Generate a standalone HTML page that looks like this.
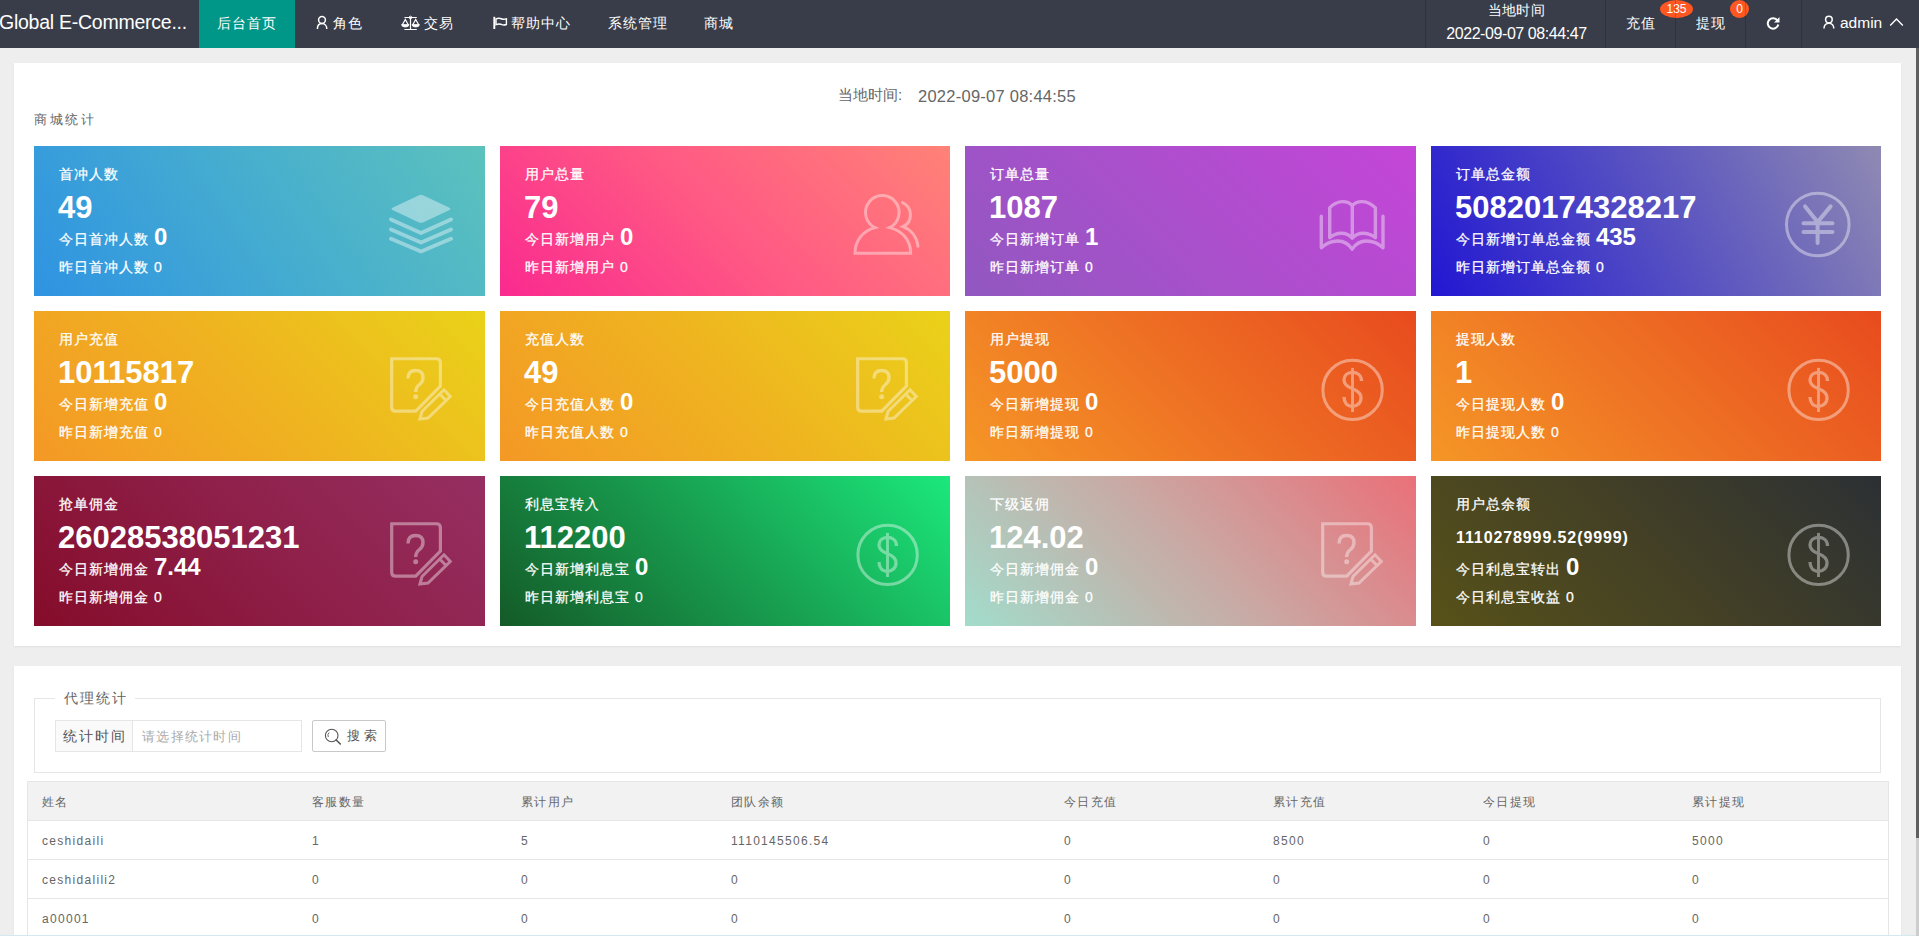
<!DOCTYPE html>
<html><head><meta charset="utf-8">
<style>
*{margin:0;padding:0;box-sizing:border-box}
html,body{width:1919px;height:936px;overflow:hidden;background:#eeeeee;font-family:"Liberation Sans",sans-serif;font-size:14px;color:#666}
.hdr{position:absolute;left:0;top:0;width:1919px;height:48px;background:#393D49;color:#fff}
.logo{position:absolute;left:-1px;top:0;height:48px;line-height:45px;font-size:19.5px;color:#fff;white-space:nowrap;letter-spacing:-0.25px}
.it{position:absolute;top:0;height:48px;line-height:46px;font-size:14px;color:#fff;white-space:nowrap;letter-spacing:1px}
.act{background:#009688}
.it svg{position:absolute}
.sep{position:absolute;top:0;width:1px;height:48px;background:rgba(0,0,0,.17);z-index:2}
.badge{position:absolute;top:0;height:18px;border-radius:50%;background:#FF5722;color:#fff;font-size:12px;line-height:18px;text-align:center}
.scroll{position:absolute;left:1916px;top:48px;width:3px;height:790px;background:#5f5f5f}
.scroll2{position:absolute;left:1916px;top:838px;width:3px;height:98px;background:#cdcdcd}
.panel{position:absolute;background:#fff;box-shadow:0 1px 2px rgba(0,0,0,.06)}
.card{position:absolute;height:150px;color:#fff;overflow:hidden}
.card .t{position:absolute;left:25px;top:20px;-webkit-text-stroke:0.25px #fff;font-size:14px;line-height:16px;white-space:nowrap;letter-spacing:1px}
.card .n{position:absolute;left:24px;top:45px;font-size:31px;font-weight:bold;line-height:34px;white-space:nowrap}
.card .n.small{font-size:16px;top:52px;line-height:20px;letter-spacing:0.9px;left:25px}
.card .d{position:absolute;left:25px;top:79.5px;-webkit-text-stroke:0.25px #fff;font-size:14px;line-height:20px;white-space:nowrap;letter-spacing:1px}
.card .d b{font-size:24px;font-weight:bold;letter-spacing:0;position:relative;top:1.5px;-webkit-text-stroke:0}
.card .y{position:absolute;left:25px;top:112.5px;-webkit-text-stroke:0.25px #fff;font-size:14px;line-height:16px;white-space:nowrap;letter-spacing:1px}
.card svg{position:absolute}
.ttl{position:absolute;top:86px;font-size:15px;line-height:18px;color:#666;white-space:nowrap}
.sub{position:absolute;left:34px;top:111px;font-size:13px;color:#666;letter-spacing:2.5px}
.fs{position:absolute;left:34px;top:698px;width:847px;height:75px;border:1px solid #e6e6e6}
.row{position:absolute;left:27px;width:1862px;height:40px;border:1px solid #e6e6e6;font-size:12px;color:#666;letter-spacing:1.3px}
.row.th{background:#f2f2f2}
.row span{position:absolute;top:12px;white-space:nowrap}
.row.td span{top:13px}
</style></head><body>
<div class="hdr">
  <div class="logo">Global E-Commerce...</div>
  <div class="it act" style="left:199px;width:96px;text-align:center">后台首页</div>
  <svg style="position:absolute;left:312px;top:12px" width="20" height="22" viewBox="312 12 20 22"><circle cx="322" cy="20" r="3.4" fill="none" stroke="#fff" stroke-width="1.5"/><path d="M317.4 29 C317.4 25.5 319.5 23.6 322 23.6 C324.5 23.6 326.8 25.5 326.8 29" fill="none" stroke="#fff" stroke-width="1.5"/></svg>
  <div class="it" style="left:333px">角色</div>
  <svg style="position:absolute;left:398px;top:12px" width="24" height="22" viewBox="398 12 24 22"><path d="M404.4 17.5 L416.8 17.5 M410.5 17 L410.5 29.5 M404.4 29.5 L416.8 29.5 M402.2 25 L405.3 19.5 L408.4 25 M412.6 25 L415.7 19.5 L418.8 25" fill="none" stroke="#fff" stroke-width="1.2"/><circle cx="410.5" cy="17.5" r="1.3" fill="none" stroke="#fff" stroke-width="1"/><path d="M401.6 24.6 L409 24.6 A3.7 2.4 0 0 1 401.6 24.6 Z M412 24.6 L419.4 24.6 A3.7 2.4 0 0 1 412 24.6 Z" fill="#fff" stroke="#fff" stroke-width="0.8"/></svg>
  <div class="it" style="left:424px">交易</div>
  <svg style="position:absolute;left:488px;top:12px" width="24" height="22" viewBox="488 12 24 22"><path d="M494.3 16.8 L494.3 29" fill="none" stroke="#fff" stroke-width="1.9"/><path d="M496 18.8 C498.5 17.8 500.5 18.3 502 19 C503.5 19.7 505 19.2 506.4 18.8 L506.4 24.5 C505 25 503.5 25.3 502 24.7 C500.5 24 498.5 23.7 496 24.7 Z" fill="none" stroke="#fff" stroke-width="1.4"/></svg>
  <div class="it" style="left:511px">帮助中心</div>
  <div class="it" style="left:608px">系统管理</div>
  <div class="it" style="left:704px">商城</div>

  <div class="sep" style="left:1425px"></div>
  <div class="it" style="left:1427px;width:179px;text-align:center;line-height:18px;top:1px;font-size:14px;letter-spacing:0.4px">当地时间</div>
  <div class="it" style="left:1427px;width:179px;text-align:center;line-height:18px;top:25px;font-size:16px;letter-spacing:-0.42px;padding-left:0px">2022-09-07 08:44:47</div>
  <div class="sep" style="left:1605px"></div>
  <div class="it" style="left:1626px;top:0px">充值</div>
  <div class="badge" style="left:1660px;width:33px">135</div>
  <div class="sep" style="left:1675px"></div>
  <div class="it" style="left:1696px;top:0px">提现</div>
  <div class="badge" style="left:1730px;width:19px">0</div>
  <div class="sep" style="left:1745px"></div>
  <div class="it" style="left:1766px">
    <svg style="left:0;top:16px" width="14" height="14" viewBox="0 0 14 14"><path d="M11.5 4.5 A5.3 5.3 0 1 0 12.3 8.5" fill="none" stroke="#fff" stroke-width="2"/><path d="M13.5 1 L13.5 6.5 L8 6.5 Z" fill="#fff"/></svg></div>
  <div class="sep" style="left:1801px"></div>
  <svg style="position:absolute;left:1818px;top:12px" width="20" height="22" viewBox="1818 12 20 22"><circle cx="1828.9" cy="19.6" r="3.3" fill="none" stroke="#fff" stroke-width="1.5"/><path d="M1824 28.6 C1824 25.2 1826.2 23.2 1828.9 23.2 C1831.6 23.2 1833.8 25.2 1833.8 28.6" fill="none" stroke="#fff" stroke-width="1.5"/></svg>
  <div class="it" style="left:1840px;font-size:15.5px;letter-spacing:0">admin</div>
  <svg style="position:absolute;left:1889px;top:17px" width="16" height="10" viewBox="0 0 16 10"><path d="M1.2 8.5 L7.5 2 L13.8 8.5" fill="none" stroke="#fff" stroke-width="1.4"/></svg>
</div>
<div class="scroll"></div><div class="scroll2"></div>

<div class="panel" style="left:14px;top:63px;width:1887px;height:583px"></div>
<div class="panel" style="left:14px;top:666px;width:1887px;height:280px"></div>
<div class="ttl" style="left:838px">当地时间</div><div class="ttl" style="left:898px;font-size:15px">:</div><div class="ttl" style="left:918px;font-size:16.5px;letter-spacing:0.25px;top:86.5px">2022-09-07 08:44:55</div>
<div class="sub">商城统计</div>
<div class="card" style="left:34px;top:146px;width:451px;background:linear-gradient(55deg,#2f93e2 0%,#45acd0 50%,#5cc2bd 100%)">
<div class="t">首冲人数</div><div class="n">49</div>
<div class="d">今日首冲人数 <b>0</b></div><div class="y">昨日首冲人数 0</div>
<svg style="left:352px;top:46px;opacity:.4" width="70" height="62" viewBox="0 0 70 62">
   <path d="M33 3.2 Q35 2.3 37 3.2 L63 15.4 Q66 16.8 63 18.2 L37 30.4 Q35 31.3 33 30.4 L7 18.2 Q4 16.8 7 15.4 Z" fill="#fff"/>
   <path d="M5 27.4 L35 41 L65 27.4 M5 37.5 L35 50.5 L65 37.5 M5 46.7 L35 59.6 L65 46.7" fill="none" stroke="#fff" stroke-width="3.8" stroke-linecap="round" stroke-linejoin="round"/></svg></div>
<div class="card" style="left:500px;top:146px;width:450px;background:linear-gradient(45deg,#fa2a8f 0%,#ff5a84 50%,#ff8277 100%)">
<div class="t">用户总量</div><div class="n">79</div>
<div class="d">今日新增用户 <b>0</b></div><div class="y">昨日新增用户 0</div>
<svg style="left:352px;top:46px;opacity:.4" width="70" height="66" viewBox="0 0 70 66">
   <path d="M23.1 35.6 A16.8 16.8 0 1 1 37.5 35.6 C50 38.5 58.7 48 58.7 61.3 L3 61.3 C3 48 11.5 38.5 23.1 35.6 Z" fill="none" stroke="#fff" stroke-width="3" stroke-linejoin="miter"/>
   <path d="M50.5 10.6 A13.2 13.2 0 0 1 51 34.6 C60 38 65 46 66 54.3" fill="none" stroke="#fff" stroke-width="3" stroke-linecap="round"/></svg></div>
<div class="card" style="left:965px;top:146px;width:451px;background:linear-gradient(45deg,#9158c0 0%,#ab4fcc 50%,#c545d8 100%)">
<div class="t">订单总量</div><div class="n">1087</div>
<div class="d">今日新增订单 <b>1</b></div><div class="y">昨日新增订单 0</div>
<svg style="left:352px;top:52px;opacity:.4" width="72" height="56" viewBox="0 0 72 56">
   <path d="M12.7 39.7 L12.7 9.9 C20 2 30 2 35.3 7.5 C40.6 2 50.6 2 58.4 9.9 L58.4 39.7 C51 34 41 33.5 35.3 40.2 C29.6 33.5 19.6 34 12.7 39.7 Z M35.3 7.5 L35.3 40" fill="none" stroke="#fff" stroke-width="3.4" stroke-linejoin="round" stroke-linecap="round"/>
   <path d="M4.3 18.3 L4.3 49.8 C14 41 28 40 35.1 51.2 C42.2 40 56.3 41 66 49.8 L66 18.3" fill="none" stroke="#fff" stroke-width="3.4" stroke-linejoin="round" stroke-linecap="round"/></svg></div>
<div class="card" style="left:1431px;top:146px;width:450px;background:linear-gradient(62deg,#2217d2 0%,#5650c2 50%,#8f8ab2 100%)">
<div class="t">订单总金额</div><div class="n">50820174328217</div>
<div class="d">今日新增订单总金额 <b>435</b></div><div class="y">昨日新增订单总金额 0</div>
<svg style="left:351px;top:44px;opacity:.4" width="70" height="70" viewBox="0 0 70 70">
   <circle cx="35.8" cy="34.5" r="31.3" fill="none" stroke="#fff" stroke-width="3"/>
   <path d="M23.1 16.4 L35.6 32 L48.6 16.4 M35.6 32 L35.6 53 M21.5 33.3 L50.5 33.3 M21.5 41.9 L50.5 41.9" fill="none" stroke="#fff" stroke-width="4" stroke-linecap="round"/></svg></div>
<div class="card" style="left:34px;top:311px;width:451px;background:linear-gradient(45deg,#f49826 0%,#efb320 50%,#ead219 100%)">
<div class="t">用户充值</div><div class="n">10115817</div>
<div class="d">今日新增充值 <b>0</b></div><div class="y">昨日新增充值 0</div>
<svg style="left:354px;top:45px;opacity:.4" width="70" height="70" viewBox="0 0 70 70">
   <path d="M3.7 2.75 L48.4 2.75 Q52.4 2.75 52.4 6.75 L52.4 30.2 L27.7 55.2 L7.7 55.2 Q3.7 55.2 3.7 51.2 Z" fill="none" stroke="#fff" stroke-width="3.2"/>
   <path d="M20 22.5 Q20 14.5 27.5 14.5 Q35 14.5 35 21.5 Q35 25.5 31.5 28.5 Q27.7 31.5 27.7 36" fill="none" stroke="#fff" stroke-width="3.4"/>
   <circle cx="27.7" cy="40.7" r="2.5" fill="#fff"/>
   <path d="M32 63 L34 55.5 L56 33.8 L62.3 40.5 L40 62 Z M51.7 38 L58 44.5" fill="none" stroke="#fff" stroke-width="3" stroke-linejoin="miter"/></svg></div>
<div class="card" style="left:500px;top:311px;width:450px;background:linear-gradient(45deg,#f49826 0%,#efb320 50%,#ead219 100%)">
<div class="t">充值人数</div><div class="n">49</div>
<div class="d">今日充值人数 <b>0</b></div><div class="y">昨日充值人数 0</div>
<svg style="left:354px;top:45px;opacity:.4" width="70" height="70" viewBox="0 0 70 70">
   <path d="M3.7 2.75 L48.4 2.75 Q52.4 2.75 52.4 6.75 L52.4 30.2 L27.7 55.2 L7.7 55.2 Q3.7 55.2 3.7 51.2 Z" fill="none" stroke="#fff" stroke-width="3.2"/>
   <path d="M20 22.5 Q20 14.5 27.5 14.5 Q35 14.5 35 21.5 Q35 25.5 31.5 28.5 Q27.7 31.5 27.7 36" fill="none" stroke="#fff" stroke-width="3.4"/>
   <circle cx="27.7" cy="40.7" r="2.5" fill="#fff"/>
   <path d="M32 63 L34 55.5 L56 33.8 L62.3 40.5 L40 62 Z M51.7 38 L58 44.5" fill="none" stroke="#fff" stroke-width="3" stroke-linejoin="miter"/></svg></div>
<div class="card" style="left:965px;top:311px;width:451px;background:linear-gradient(45deg,#f59626 0%,#ee7024 50%,#e84b1e 100%)">
<div class="t">用户提现</div><div class="n">5000</div>
<div class="d">今日新增提现 <b>0</b></div><div class="y">昨日新增提现 0</div>
<svg style="left:352px;top:44px;opacity:.4" width="70" height="70" viewBox="0 0 70 70">
   <circle cx="35.6" cy="34.9" r="29.7" fill="none" stroke="#fff" stroke-width="3"/>
   <path d="M44.5 26 C44.5 20 40 17.3 35.5 17.3 C30.5 17.3 27 20.5 27 25 C27 30 31 32 35.5 33.7 C40.5 35.5 44 38 44 43 C44 48 40 51.3 35.5 51.3 C30 51.3 27 47.5 27 42" fill="none" stroke="#fff" stroke-width="3.3"/>
   <path d="M35.5 12.9 L35.5 57" fill="none" stroke="#fff" stroke-width="2.9"/></svg></div>
<div class="card" style="left:1431px;top:311px;width:450px;background:linear-gradient(45deg,#f59626 0%,#ee7024 50%,#e84b1e 100%)">
<div class="t">提现人数</div><div class="n">1</div>
<div class="d">今日提现人数 <b>0</b></div><div class="y">昨日提现人数 0</div>
<svg style="left:352px;top:44px;opacity:.4" width="70" height="70" viewBox="0 0 70 70">
   <circle cx="35.6" cy="34.9" r="29.7" fill="none" stroke="#fff" stroke-width="3"/>
   <path d="M44.5 26 C44.5 20 40 17.3 35.5 17.3 C30.5 17.3 27 20.5 27 25 C27 30 31 32 35.5 33.7 C40.5 35.5 44 38 44 43 C44 48 40 51.3 35.5 51.3 C30 51.3 27 47.5 27 42" fill="none" stroke="#fff" stroke-width="3.3"/>
   <path d="M35.5 12.9 L35.5 57" fill="none" stroke="#fff" stroke-width="2.9"/></svg></div>
<div class="card" style="left:34px;top:476px;width:451px;background:linear-gradient(45deg,#850c2a 0%,#8e1f48 50%,#962f62 100%)">
<div class="t">抢单佣金</div><div class="n">26028538051231</div>
<div class="d">今日新增佣金 <b>7.44</b></div><div class="y">昨日新增佣金 0</div>
<svg style="left:354px;top:45px;opacity:.4" width="70" height="70" viewBox="0 0 70 70">
   <path d="M3.7 2.75 L48.4 2.75 Q52.4 2.75 52.4 6.75 L52.4 30.2 L27.7 55.2 L7.7 55.2 Q3.7 55.2 3.7 51.2 Z" fill="none" stroke="#fff" stroke-width="3.2"/>
   <path d="M20 22.5 Q20 14.5 27.5 14.5 Q35 14.5 35 21.5 Q35 25.5 31.5 28.5 Q27.7 31.5 27.7 36" fill="none" stroke="#fff" stroke-width="3.4"/>
   <circle cx="27.7" cy="40.7" r="2.5" fill="#fff"/>
   <path d="M32 63 L34 55.5 L56 33.8 L62.3 40.5 L40 62 Z M51.7 38 L58 44.5" fill="none" stroke="#fff" stroke-width="3" stroke-linejoin="miter"/></svg></div>
<div class="card" style="left:500px;top:476px;width:450px;background:linear-gradient(45deg,#145a28 0%,#189f50 50%,#1be87c 100%)">
<div class="t">利息宝转入</div><div class="n">112200</div>
<div class="d">今日新增利息宝 <b>0</b></div><div class="y">昨日新增利息宝 0</div>
<svg style="left:352px;top:44px;opacity:.4" width="70" height="70" viewBox="0 0 70 70">
   <circle cx="35.6" cy="34.9" r="29.7" fill="none" stroke="#fff" stroke-width="3"/>
   <path d="M44.5 26 C44.5 20 40 17.3 35.5 17.3 C30.5 17.3 27 20.5 27 25 C27 30 31 32 35.5 33.7 C40.5 35.5 44 38 44 43 C44 48 40 51.3 35.5 51.3 C30 51.3 27 47.5 27 42" fill="none" stroke="#fff" stroke-width="3.3"/>
   <path d="M35.5 12.9 L35.5 57" fill="none" stroke="#fff" stroke-width="2.9"/></svg></div>
<div class="card" style="left:965px;top:476px;width:451px;background:linear-gradient(45deg,#a2dccb 0%,#c9a9a4 50%,#ea7079 100%)">
<div class="t">下级返佣</div><div class="n">124.02</div>
<div class="d">今日新增佣金 <b>0</b></div><div class="y">昨日新增佣金 0</div>
<svg style="left:354px;top:45px;opacity:.4" width="70" height="70" viewBox="0 0 70 70">
   <path d="M3.7 2.75 L48.4 2.75 Q52.4 2.75 52.4 6.75 L52.4 30.2 L27.7 55.2 L7.7 55.2 Q3.7 55.2 3.7 51.2 Z" fill="none" stroke="#fff" stroke-width="3.2"/>
   <path d="M20 22.5 Q20 14.5 27.5 14.5 Q35 14.5 35 21.5 Q35 25.5 31.5 28.5 Q27.7 31.5 27.7 36" fill="none" stroke="#fff" stroke-width="3.4"/>
   <circle cx="27.7" cy="40.7" r="2.5" fill="#fff"/>
   <path d="M32 63 L34 55.5 L56 33.8 L62.3 40.5 L40 62 Z M51.7 38 L58 44.5" fill="none" stroke="#fff" stroke-width="3" stroke-linejoin="miter"/></svg></div>
<div class="card" style="left:1431px;top:476px;width:450px;background:linear-gradient(45deg,#575118 0%,#434026 50%,#2c3034 100%)">
<div class="t">用户总余额</div><div class="n small">1110278999.52(9999)</div>
<div class="d">今日利息宝转出 <b>0</b></div><div class="y">今日利息宝收益 0</div>
<svg style="left:352px;top:44px;opacity:.4" width="70" height="70" viewBox="0 0 70 70">
   <circle cx="35.6" cy="34.9" r="29.7" fill="none" stroke="#fff" stroke-width="3"/>
   <path d="M44.5 26 C44.5 20 40 17.3 35.5 17.3 C30.5 17.3 27 20.5 27 25 C27 30 31 32 35.5 33.7 C40.5 35.5 44 38 44 43 C44 48 40 51.3 35.5 51.3 C30 51.3 27 47.5 27 42" fill="none" stroke="#fff" stroke-width="3.3"/>
   <path d="M35.5 12.9 L35.5 57" fill="none" stroke="#fff" stroke-width="2.9"/></svg></div>
<div class="fs" style="width:1847px"></div>
<div style="position:absolute;left:55px;top:690px;width:80px;padding-left:9px;background:#fff;font-size:14px;color:#666;line-height:16px;letter-spacing:2px">代理统计</div>
<div style="position:absolute;left:55px;top:720px;width:78px;height:32px;border:1px solid #e6e6e6;background:#fafafa;font-size:14px;color:#555;line-height:30px;padding-left:8px;letter-spacing:2px;padding-left:7px">统计时间</div>
<div style="position:absolute;left:132px;top:720px;width:170px;height:32px;border:1px solid #e6e6e6;background:#fff;font-size:13px;color:#aaa;line-height:32px;padding-left:9px;letter-spacing:1.3px">请选择统计时间</div>
<div style="position:absolute;left:312px;top:720px;width:74px;height:32px;border:1px solid #c9c9c9;background:#fff;border-radius:2px;font-size:13px;color:#555;line-height:30px">
  <svg style="position:absolute;left:11px;top:7px" width="18" height="18" viewBox="0 0 18 18"><circle cx="7.7" cy="7.5" r="6.3" fill="none" stroke="#555" stroke-width="1.1"/><path d="M12.2 12 L16.3 16" stroke="#555" stroke-width="1.6" stroke-linecap="round"/><path d="M4.3 9 A3.8 3.8 0 0 1 5.2 4.5" fill="none" stroke="#555" stroke-width="0.9"/></svg>
  <span style="position:absolute;left:34px;letter-spacing:4px">搜索</span></div>
<div class="row th" style="top:781px"><span style="left:14px">姓名</span><span style="left:284px">客服数量</span><span style="left:493px">累计用户</span><span style="left:703px">团队余额</span><span style="left:1036px">今日充值</span><span style="left:1245px">累计充值</span><span style="left:1455px">今日提现</span><span style="left:1664px">累计提现</span></div>
<div class="row td" style="top:820px"><span style="left:14px">ceshidaili</span><span style="left:284px">1</span><span style="left:493px">5</span><span style="left:703px">1110145506.54</span><span style="left:1036px">0</span><span style="left:1245px">8500</span><span style="left:1455px">0</span><span style="left:1664px">5000</span></div>
<div class="row td" style="top:859px"><span style="left:14px">ceshidalili2</span><span style="left:284px">0</span><span style="left:493px">0</span><span style="left:703px">0</span><span style="left:1036px">0</span><span style="left:1245px">0</span><span style="left:1455px">0</span><span style="left:1664px">0</span></div>
<div class="row td" style="top:898px"><span style="left:14px">a00001</span><span style="left:284px">0</span><span style="left:493px">0</span><span style="left:703px">0</span><span style="left:1036px">0</span><span style="left:1245px">0</span><span style="left:1455px">0</span><span style="left:1664px">0</span></div>
<div style="position:absolute;left:0;top:935px;width:1916px;height:1px;background:#d5e8ef"></div>
</body></html>
